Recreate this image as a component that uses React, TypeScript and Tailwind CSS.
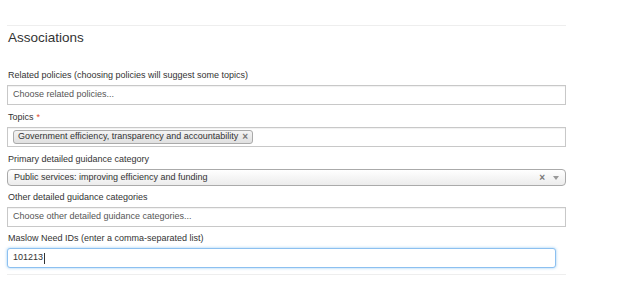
import React from "react";

function Label({ children, required }: { children: React.ReactNode; required?: boolean }) {
  return (
    <div className="text-[9px] leading-[12px] text-[#333] mb-[4px] ml-px">
      {children}
      {required && <span className="text-[#e04a2f] ml-[3px]">*</span>}
    </div>
  );
}

function TextBox({ children, className = "" }: { children?: React.ReactNode; className?: string }) {
  return (
    <div
      className={
        "h-[20px] border border-[#c8c8c8] bg-white flex items-center px-[5px] text-[9px] text-[#555] shadow-[inset_0_1px_1px_rgba(0,0,0,0.06)] mb-[6px] " +
        className
      }
    >
      {children}
    </div>
  );
}

export default function App() {
  return (
    <div className="w-[620px] h-[284px] bg-white font-['Liberation_Sans',Arial,sans-serif] overflow-hidden">
      <div className="ml-[7px] w-[559px] pt-[25px]">
        <div className="border-t border-[#eeeeee]" />
        <h2 className="text-[13.5px] leading-[20px] text-[#333] mt-[2px] mb-[21px] ml-px">Associations</h2>

        <Label>Related policies (choosing policies will suggest some topics)</Label>
        <TextBox>Choose related policies...</TextBox>

        <Label required>Topics</Label>
        <TextBox className="px-[4px]">
          <span className="h-[14px] flex items-center gap-[4px] pl-[4px] pr-[4px] rounded-[3px] border border-[#aaa] bg-gradient-to-b from-[#f4f4f4] to-[#e0e0e0] text-[#333] text-[9px]">
            Government efficiency, transparency and accountability
            <span className="text-[#777] text-[10px] font-bold leading-none">×</span>
          </span>
        </TextBox>

        <Label>Primary detailed guidance category</Label>
        <div className="h-[17px] mb-[5px] rounded-[4px] border border-[#aaa] bg-gradient-to-b from-white to-[#ececec] flex items-center pl-[6px] pr-[6px] text-[9px] text-[#333]">
          <span className="flex-1">Public services: improving efficiency and funding</span>
          <span className="text-[#777] font-bold text-[10px] leading-none mr-[8px]">×</span>
          <svg width="6" height="4" viewBox="0 0 6 4">
            <path d="M0 0 L6 0 L3 4 Z" fill="#999" />
          </svg>
        </div>

        <Label>Other detailed guidance categories</Label>
        <TextBox className="!mb-[5px]">Choose other detailed guidance categories...</TextBox>

        <Label>Maslow Need IDs (enter a comma-separated list)</Label>
        <div className="w-[549px] h-[20px] rounded-[3px] border border-[#8cc0f0] shadow-[0_0_3px_rgba(82,168,236,0.6)] bg-white flex items-center px-[5px] text-[9px] text-[#333] mb-[6px]">
          101213<span className="w-px h-[11px] bg-[#333] ml-px" />
        </div>

        <div className="border-t border-[#eeeeee]" />
      </div>
    </div>
  );
}
